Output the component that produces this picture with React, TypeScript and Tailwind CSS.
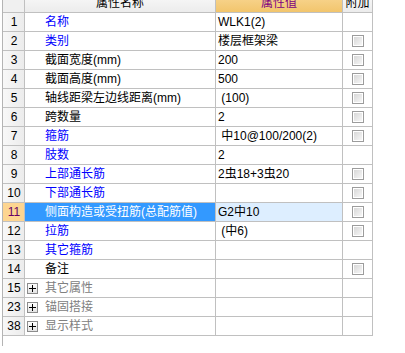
type Row = {
  no: string;
  name: string;
  value?: string;
  tone: "blue" | "black" | "gray";
  check?: boolean;
  group?: boolean;
  selected?: boolean;
};

const rows: Row[] = [
  { no: "1", name: "名称", value: "WLK1(2)", tone: "blue" },
  { no: "2", name: "类别", value: "楼层框架梁", tone: "blue", check: true },
  { no: "3", name: "截面宽度(mm)", value: "200", tone: "black", check: true },
  { no: "4", name: "截面高度(mm)", value: "500", tone: "black", check: true },
  { no: "5", name: "轴线距梁左边线距离(mm)", value: " (100)", tone: "black", check: true },
  { no: "6", name: "跨数量", value: "2", tone: "black", check: true },
  { no: "7", name: "箍筋", value: " 中10@100/200(2)", tone: "blue", check: true },
  { no: "8", name: "肢数", value: "2", tone: "blue" },
  { no: "9", name: "上部通长筋", value: "2虫18+3虫20", tone: "blue", check: true },
  { no: "10", name: "下部通长筋", value: "", tone: "blue", check: true },
  { no: "11", name: "侧面构造或受扭筋(总配筋值)", value: "G2中10", tone: "blue", check: true, selected: true },
  { no: "12", name: "拉筋", value: " (中6)", tone: "blue", check: true },
  { no: "13", name: "其它箍筋", value: "", tone: "blue" },
  { no: "14", name: "备注", value: "", tone: "black", check: true },
  { no: "15", name: "其它属性", tone: "gray", group: true },
  { no: "23", name: "锚固搭接", tone: "gray", group: true },
  { no: "38", name: "显示样式", tone: "gray", group: true },
];

const toneClass = {
  blue: "text-[#0000ff]",
  black: "text-black",
  gray: "text-[#808080]",
};

function CheckBox() {
  return (
    <span className="block h-[12px] w-[12px] border border-[#9c9c9c] bg-white p-px">
      <span className="block h-full w-full bg-gradient-to-br from-[#d8d8d8] to-[#f6f6f6]" />
    </span>
  );
}

function PlusBox() {
  return (
    <span className="flex h-[11px] w-[11px] items-center justify-center border border-[#8c8c8c] bg-gradient-to-b from-white to-[#e4e4e4]">
      <svg width="7" height="7" viewBox="0 0 7 7">
        <path d="M0 3.5h7M3.5 0v7" stroke="#000" strokeWidth="1" />
      </svg>
    </span>
  );
}

export default function App() {
  return (
    <div className="h-[353px] w-[405px] overflow-hidden bg-white text-[12px] leading-none font-['Liberation_Sans','Noto_Sans_CJK_SC',sans-serif]">
      <div className="ml-[2px] h-full w-[371px] border-l border-[#b4b4b4]">
        {/* header, scrolled so only its lower part shows */}
        <div className="-mt-[7px] grid h-[20px] grid-cols-[22px_191px_127px_30px] border-b border-[#c0c0c0]">
          <div className="border-r border-[#c0c0c0] bg-[#f0f0f0]" />
          <div className="flex items-center justify-center border-r border-[#c0c0c0] bg-gradient-to-b from-[#fafafa] to-[#ececec] text-black">
            属性名称
          </div>
          <div className="flex items-center justify-center border-r border-[#c0c0c0] bg-gradient-to-b from-[#f9d896] to-[#f2c56c] text-[#800080]">
            属性值
          </div>
          <div className="flex items-center justify-center border-r border-[#c0c0c0] bg-gradient-to-b from-[#fafafa] to-[#ececec] text-black">
            附加
          </div>
        </div>

        {rows.map((r) => (
          <div
            key={r.no}
            className="grid h-[19px] grid-cols-[22px_191px_127px_30px] border-b border-[#c0c0c0]"
          >
            <div
              className={
                r.selected
                  ? "flex items-center justify-center border-r border-[#c0c0c0] bg-[#fdd591] pl-px text-[#660066]"
                  : "flex items-center justify-center border-r border-[#c0c0c0] bg-gradient-to-r from-[#f8f8f8] to-[#ececec] pl-px text-black"
              }
            >
              {r.no}
            </div>
            <div
              className={
                r.selected
                  ? "flex items-center whitespace-nowrap border-r border-[#c0c0c0] bg-[#3399ff] pl-[20px] text-white"
                  : `flex items-center gap-[7px] whitespace-nowrap border-r border-[#c0c0c0] ${r.group ? "pl-[2px]" : "pl-[20px]"} ${toneClass[r.tone]}`
              }
            >
              {r.group && <PlusBox />}
              {r.name}
            </div>
            <div
              className={
                r.selected
                  ? "flex items-center whitespace-pre border-r border-[#c0c0c0] bg-[#ddeeff] pl-[2px] text-black"
                  : "flex items-center whitespace-pre border-r border-[#c0c0c0] pl-[2px] text-black"
              }
            >
              {r.value}
            </div>
            <div className="flex items-center justify-center border-r border-[#c0c0c0] pl-px">
              {r.check && <CheckBox />}
            </div>
          </div>
        ))}
      </div>
    </div>
  );
}
